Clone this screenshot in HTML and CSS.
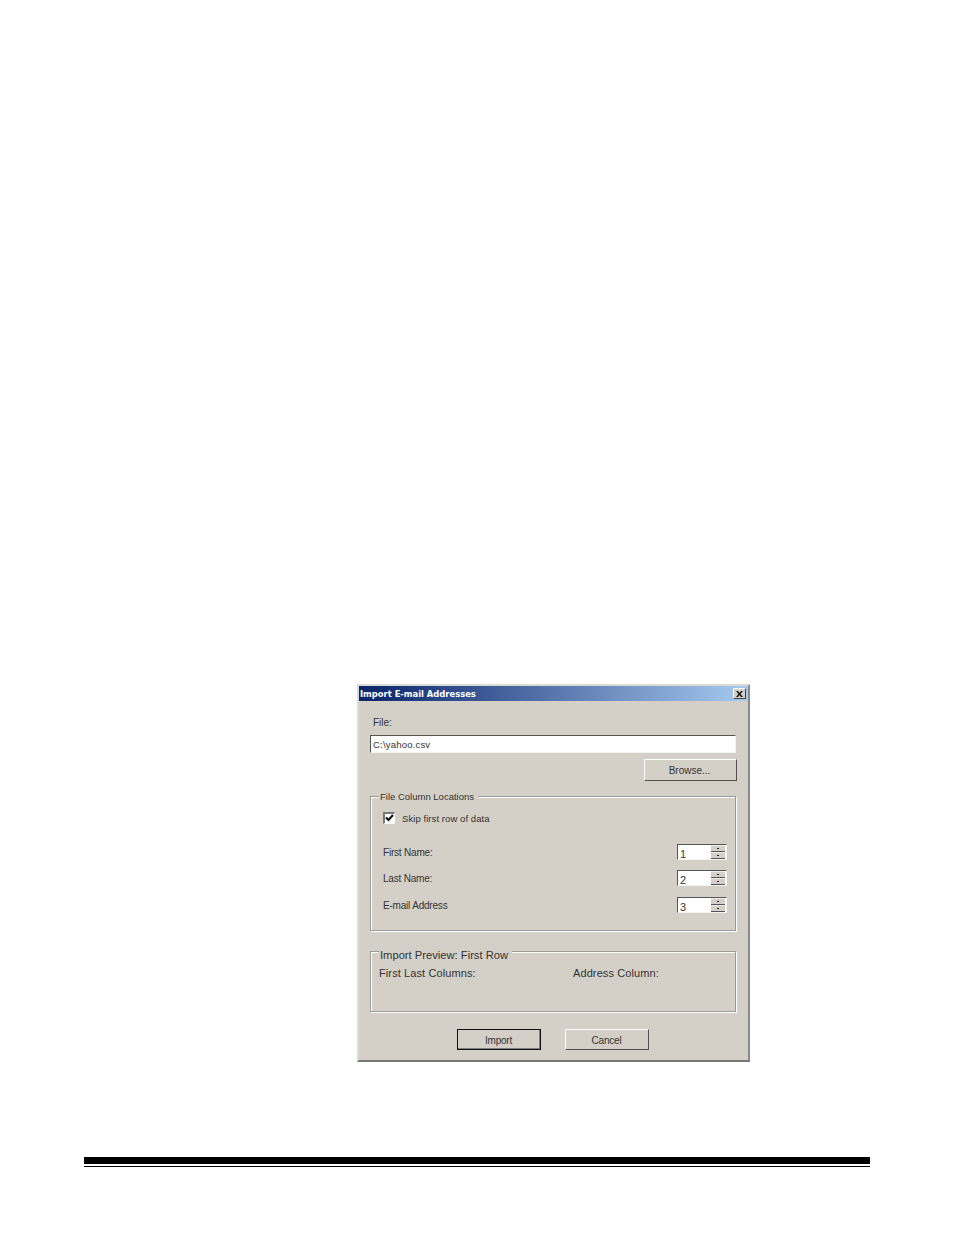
FILE: index.html
```html
<!DOCTYPE html>
<html lang="en">
<head>
    <meta charset="UTF-8">
    <title>Import E-mail Addresses</title>
    <link rel="stylesheet" href="styles.css">
</head>
<body>
    <div class="dialog">
        <div class="title-bar">
            <span class="title-text">Import E-mail Addresses</span>
            <span class="close-btn">
                <svg width="7" height="6" viewBox="0 0 7 6"><path d="M0 0h2l1.500 2L5 0h2L4.500 3 7 6H5L3.500 4 2 6H0l2.500-3z" fill="#111"/></svg>
            </span>
        </div>
        <div class="dialog-body">
            <div class="file-label">File:</div>
            <div class="text-input">C:\yahoo.csv</div>
            <div class="browse-row">
                <div class="btn btn-browse">Browse...</div>
            </div>

            <div class="group group-columns">
                <div class="legend">File Column Locations</div>
                <div class="check-row">
                    <span class="checkbox">
                        <svg width="9" height="9" viewBox="0 0 9 9"><path d="M1 3.500 3.500 6 8 1" fill="none" stroke="#111" stroke-width="2.200"/></svg>
                    </span>
                    <span class="check-label">Skip first row of data</span>
                </div>
                <div class="spin-row spin-first">
                    <span class="spin-label">First Name:</span>
                    <div class="spin"><span class="spin-value">1</span><span class="spin-btns"><i></i><i></i></span></div>
                </div>
                <div class="spin-row spin-second">
                    <span class="spin-label">Last Name:</span>
                    <div class="spin"><span class="spin-value">2</span><span class="spin-btns"><i></i><i></i></span></div>
                </div>
                <div class="spin-row spin-third">
                    <span class="spin-label">E-mail Address</span>
                    <div class="spin"><span class="spin-value">3</span><span class="spin-btns"><i></i><i></i></span></div>
                </div>
            </div>

            <div class="group group-preview">
                <div class="legend legend-large">Import Preview: First Row</div>
                <div class="preview-cols">
                    <span class="preview-first">First Last Columns:</span>
                    <span>Address Column:</span>
                </div>
            </div>

            <div class="button-row">
                <div class="btn btn-action btn-default">Import</div>
                <div class="btn btn-action">Cancel</div>
            </div>
        </div>
    </div>

    <div class="page-rule">
        <div class="rule-thick"></div>
        <div class="rule-thin"></div>
    </div>
</body>
</html>
```

FILE: styles.css
```css
* {
    margin: 0;
    padding: 0;
    box-sizing: border-box;
}

body {
    background: #fff;
    font-family: 'Liberation Sans', Arial, sans-serif;
    font-size: 10px;
    color: #333;
    height: 1235px;
    overflow: hidden;
}

.dialog {
    width: 393px;
    height: 378px;
    margin: 684px 0 0 357px;
    background: #d4d0c8;
    border: 2px solid;
    border-color: #dcdad4 #8a8a88 #777775 #dcdad4;
}

.title-bar {
    height: 15px;
    display: flex;
    align-items: center;
    justify-content: space-between;
    padding: 0 2px 0 1px;
    background: linear-gradient(to right, #0a246a, #a6caf0);
}

.title-text {
    font-family: 'DejaVu Sans', sans-serif;
    font-size: 8.400px;
    font-weight: bold;
    color: #fff;
}

.close-btn {
    width: 13px;
    height: 11px;
    display: flex;
    align-items: center;
    justify-content: center;
    background: #d4d0c8;
    border: 1px solid;
    border-color: #fff #404040 #404040 #fff;
}

.dialog-body {
    padding: 15px 11px 0;
}

.file-label {
    height: 14px;
    line-height: 14px;
    padding-left: 3px;
    margin-bottom: 5px;
}

.text-input {
    height: 18px;
    line-height: 18px;
    margin-right: 1px;
    padding-left: 2px;
    background: #fff;
    border: 1px solid;
    border-color: #555 #f4f4f2 #f4f4f2 #555;
    font-size: 9.500px;
    letter-spacing: 0.2px;
}

.browse-row {
    display: flex;
    justify-content: flex-end;
    margin-top: 6px;
}

.btn {
    display: flex;
    align-items: center;
    justify-content: center;
    background: #d4d0c8;
    border: 1px solid;
    border-color: #fff #505050 #505050 #fff;
}

.btn-browse {
    width: 93px;
    height: 22px;
    padding-right: 2px;
}

.group {
    position: relative;
    margin-right: 1px;
    border: 1px solid #9a9a98;
    box-shadow: 1px 1px 0 #fff, inset 1px 1px 0 #fff;
}

.group-columns {
    height: 135px;
    margin-top: 15px;
    padding: 15px 8px 0 12px;
}

.group-preview {
    height: 61px;
    margin-top: 20px;
    padding: 15px 8px 0;
    font-size: 11px;
}

.legend {
    position: absolute;
    top: -6px;
    left: 8px;
    padding: 0 4px 0 1px;
    background: #d4d0c8;
    font-size: 9.500px;
    line-height: 12px;
}

.legend-large {
    top: -3px;
    font-size: 11.200px;
}

.check-row {
    display: flex;
    align-items: center;
    height: 12px;
}

.checkbox {
    width: 12px;
    height: 12px;
    display: flex;
    align-items: center;
    justify-content: center;
    background: #fff;
    border-style: solid;
    border-width: 2px 1px 1px 2px;
    border-color: #777 #fff #fff #777;
}

.check-label {
    margin-left: 7px;
    font-size: 9.500px;
    letter-spacing: 0.07px;
}

.spin-row {
    display: flex;
    align-items: center;
    justify-content: space-between;
    height: 16px;
}

.spin-first {
    margin-top: 20px;
}

.spin-second {
    margin-top: 10px;
}

.spin-third {
    margin-top: 11px;
}

.spin-label {
    letter-spacing: -0.2px;
}

.spin {
    width: 50px;
    height: 16px;
    display: flex;
    justify-content: space-between;
    padding-right: 1px;
    background: #fff;
    border: 1px solid;
    border-color: #555 #f4f4f2 #f4f4f2 #555;
}

.spin-value {
    padding: 3px 0 0 2px;
    font-size: 11px;
    line-height: 12px;
}

.spin-btns {
    width: 14px;
    display: flex;
    flex-direction: column;
}

.spin-btns i {
    flex: 1;
    display: flex;
    align-items: center;
    justify-content: center;
    background: #d4d0c8;
    border-top: 1px solid #eee;
    border-bottom: 1px solid #555;
}

.spin-btns i::after {
    content: '';
    width: 2px;
    height: 1px;
    background: #222;
}

.preview-cols {
    display: flex;
    letter-spacing: 0.1px;
}

.preview-first {
    width: 194px;
}

.button-row {
    display: flex;
    justify-content: center;
    gap: 24px;
    margin-top: 17px;
    padding: 1px 2px 0 0;
    letter-spacing: -0.2px;
}

.btn-action {
    width: 84px;
    height: 21px;
    margin-top: -1px;
    padding-top: 2px;
}

.btn-default {
    border-color: #111;
    box-shadow: inset -1px -1px 0 #808080;
}

.page-rule {
    margin: 95px 84px 0;
}

.rule-thick {
    height: 7px;
    background: #000;
}

.rule-thin {
    height: 1px;
    margin-top: 2px;
    background: #000;
}
```
